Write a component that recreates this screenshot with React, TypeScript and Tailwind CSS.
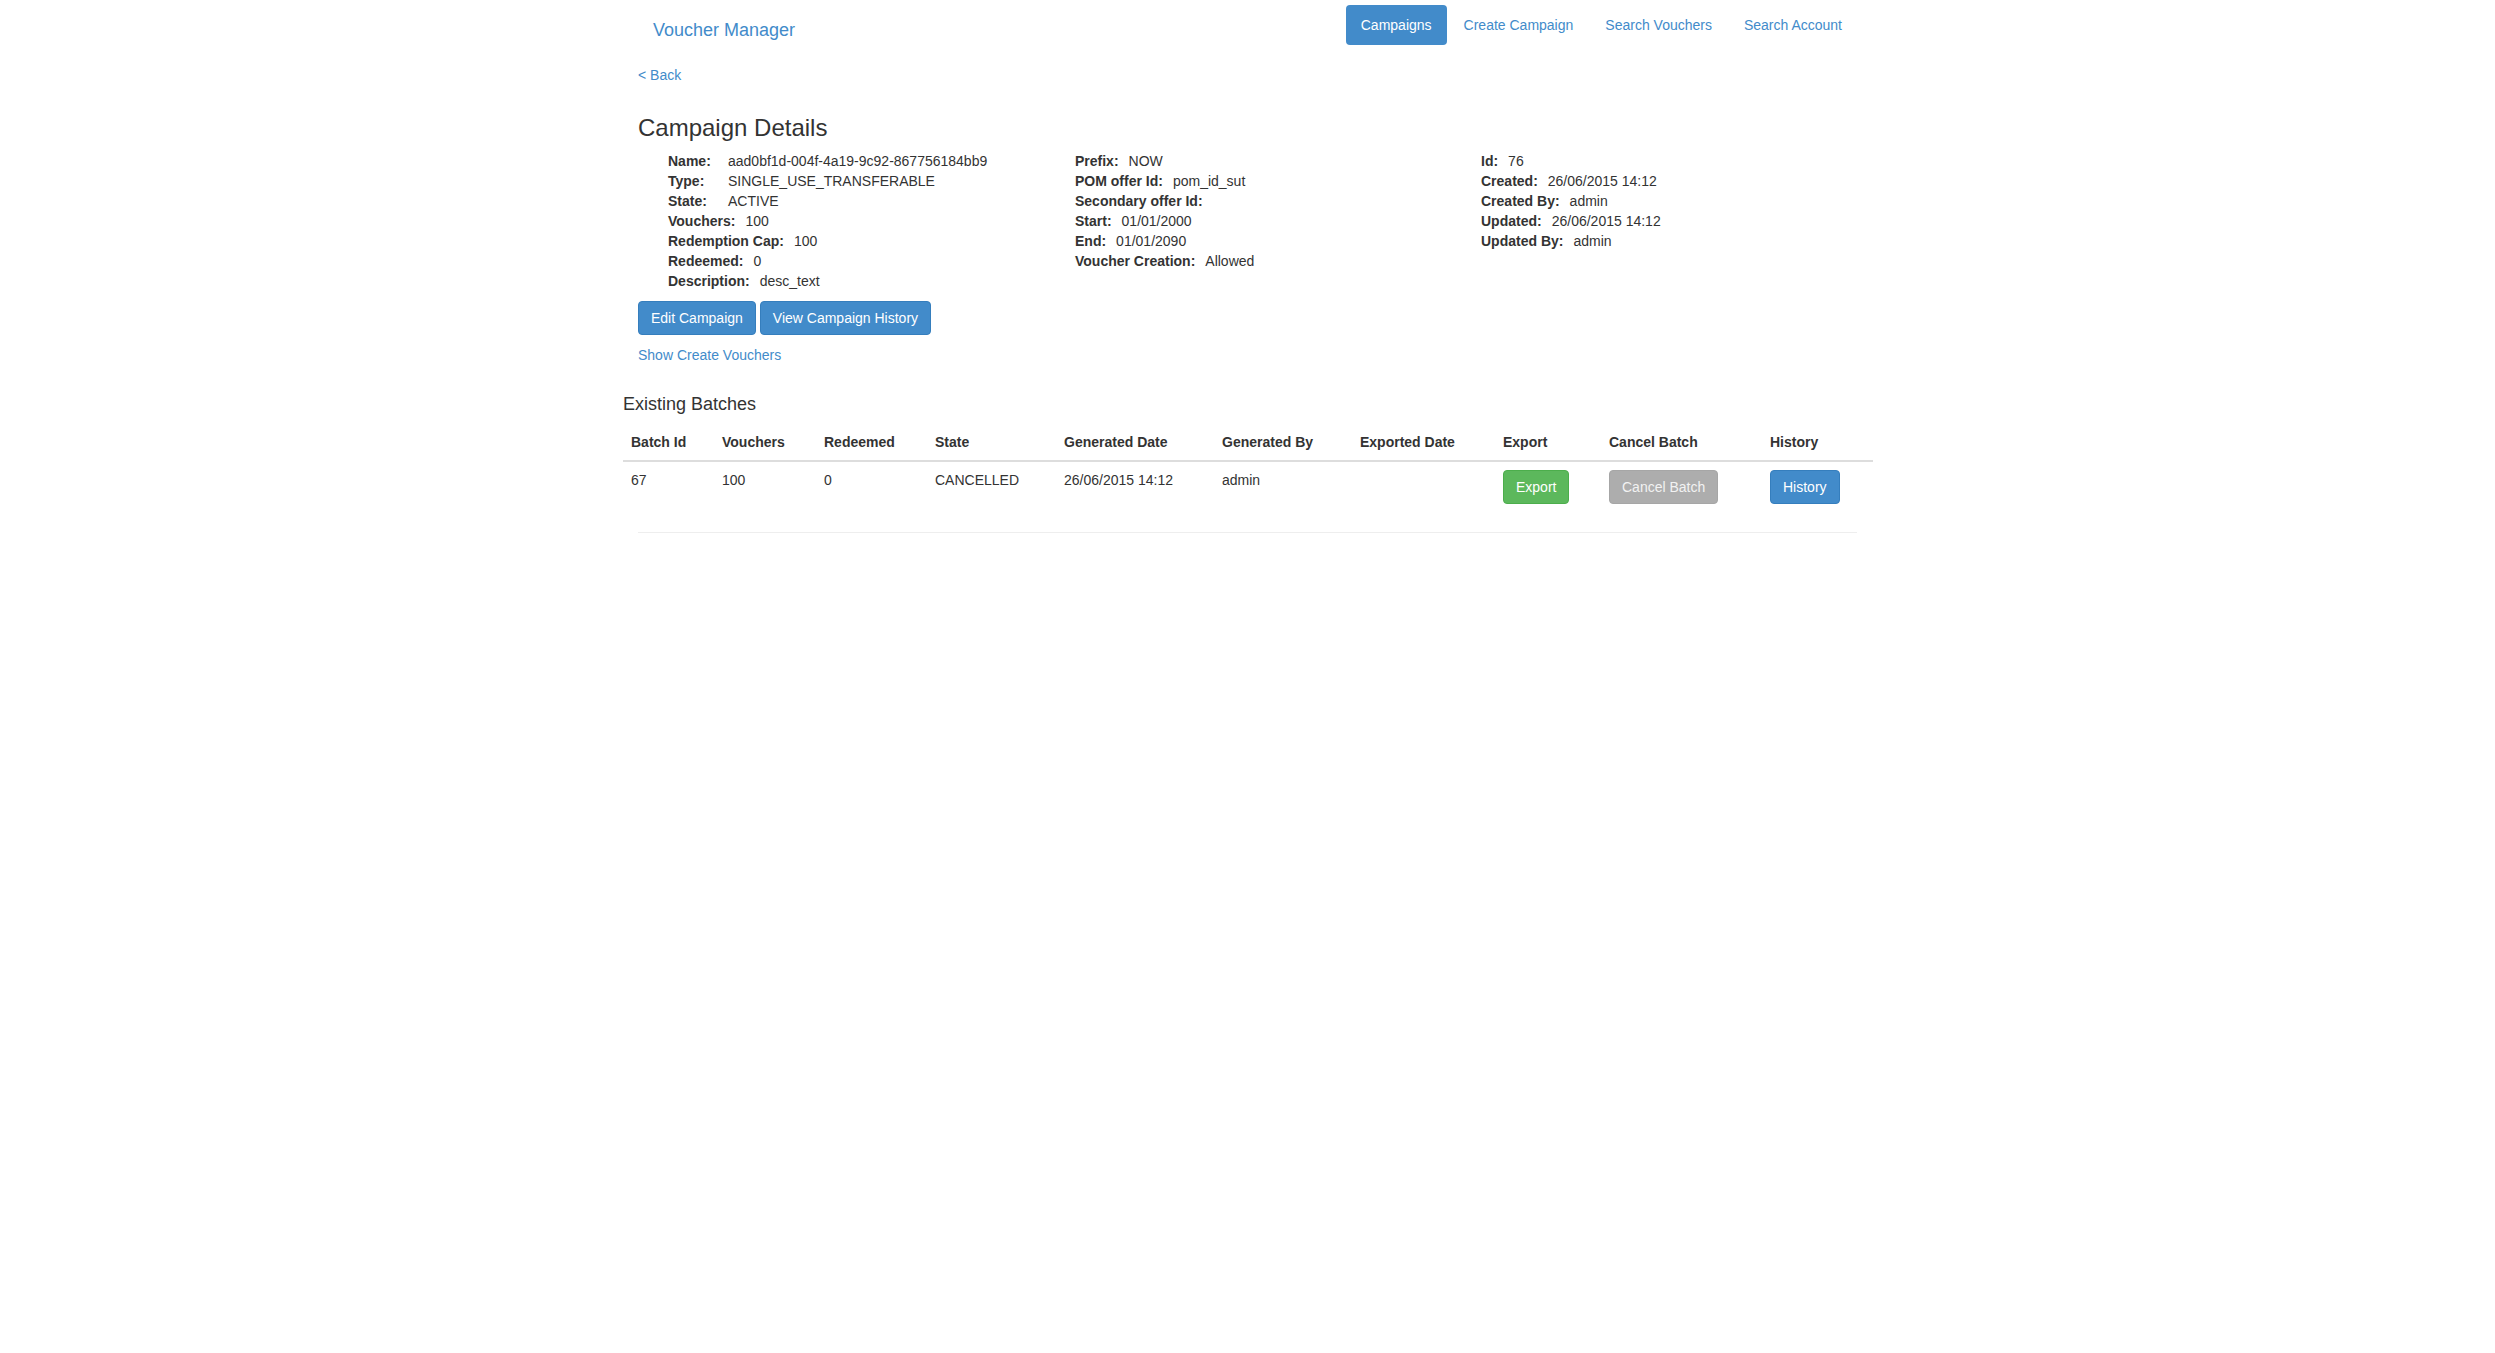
import React from 'react';

type Detail = { label: string; value: string; wide?: boolean };

const col1: Detail[] = [
  { label: 'Name:', value: 'aad0bf1d-004f-4a19-9c92-867756184bb9', wide: true },
  { label: 'Type:', value: 'SINGLE_USE_TRANSFERABLE', wide: true },
  { label: 'State:', value: 'ACTIVE', wide: true },
  { label: 'Vouchers:', value: '100' },
  { label: 'Redemption Cap:', value: '100' },
  { label: 'Redeemed:', value: '0' },
  { label: 'Description:', value: 'desc_text' },
];

const col2: Detail[] = [
  { label: 'Prefix:', value: 'NOW' },
  { label: 'POM offer Id:', value: 'pom_id_sut' },
  { label: 'Secondary offer Id:', value: '' },
  { label: 'Start:', value: '01/01/2000' },
  { label: 'End:', value: '01/01/2090' },
  { label: 'Voucher Creation:', value: 'Allowed' },
];

const col3: Detail[] = [
  { label: 'Id:', value: '76' },
  { label: 'Created:', value: '26/06/2015 14:12' },
  { label: 'Created By:', value: 'admin' },
  { label: 'Updated:', value: '26/06/2015 14:12' },
  { label: 'Updated By:', value: 'admin' },
];

function DetailList({ items }: { items: Detail[] }) {
  return (
    <ul>
      {items.map((d) => (
        <li key={d.label} className="flex whitespace-nowrap">
          <b className={d.wide ? 'min-w-[50px] font-bold' : 'font-bold'}>{d.label}</b>
          <span className="ml-[10px]">{d.value}</span>
        </li>
      ))}
    </ul>
  );
}

const columns = [
  { title: 'Batch Id', w: 'w-[91px]' },
  { title: 'Vouchers', w: 'w-[102px]' },
  { title: 'Redeemed', w: 'w-[111px]' },
  { title: 'State', w: 'w-[129px]' },
  { title: 'Generated Date', w: 'w-[158px]' },
  { title: 'Generated By', w: 'w-[138px]' },
  { title: 'Exported Date', w: 'w-[143px]' },
  { title: 'Export', w: 'w-[106px]' },
  { title: 'Cancel Batch', w: 'w-[161px]' },
  { title: 'History', w: 'w-[111px]' },
];

export default function App() {
  return (
    <div className="min-h-screen bg-white font-['Liberation_Sans',Arial,sans-serif] text-[14px] leading-[20px] text-[#333]">
      <div className="mx-auto w-[1251px]">
        {/* navbar */}
        <header className="flex h-[50px] justify-between">
          <a href="#" className="pl-[31px] pt-[20px] text-[18px] leading-[20px] text-[#428bca]">
            Voucher Manager
          </a>
          <ul className="mt-[5px] flex h-[40px] pr-[16px]">
            <li>
              <a href="#" className="block rounded-[4px] bg-[#428bca] px-[15px] py-[10px] text-white">
                Campaigns
              </a>
            </li>
            <li className="ml-[2px]">
              <a href="#" className="block px-[15px] py-[10px] text-[#428bca]">Create Campaign</a>
            </li>
            <li className="ml-[2px]">
              <a href="#" className="block px-[15px] py-[10px] text-[#428bca]">Search Vouchers</a>
            </li>
            <li className="ml-[2px]">
              <a href="#" className="block px-[15px] py-[10px] text-[#428bca]">Search Account</a>
            </li>
          </ul>
        </header>

        <div className="pl-[16px]">
          <a href="#" className="mt-[15px] block w-fit text-[#428bca]">&lt; Back</a>

          <h3 className="mt-[30px] text-[24px] leading-[26px] font-normal">Campaign Details</h3>

          <div className="mt-[10px] grid grid-cols-[407px_406px_1fr] pl-[30px]">
            <DetailList items={col1} />
            <DetailList items={col2} />
            <DetailList items={col3} />
          </div>

          <div className="mt-[10px] flex gap-[4px]">
            <button className="rounded-[4px] border border-[#357ebd] bg-[#428bca] px-[12px] py-[6px] text-white">
              Edit Campaign
            </button>
            <button className="rounded-[4px] border border-[#357ebd] bg-[#428bca] px-[12px] py-[6px] text-white">
              View Campaign History
            </button>
          </div>

          <a href="#" className="mt-[10px] block w-fit text-[#428bca]">Show Create Vouchers</a>
        </div>

        <h4 className="mt-[29px] pl-[1px] text-[18px] leading-[20px] font-normal">Existing Batches</h4>

        <table className="mt-[10px] ml-[1px] w-[1250px] table-fixed border-separate border-spacing-0 text-left">
          <thead>
            <tr>
              {columns.map((c) => (
                <th key={c.title} className={`${c.w} border-b-2 border-[#ddd] p-[8px] align-bottom font-bold`}>
                  {c.title}
                </th>
              ))}
            </tr>
          </thead>
          <tbody>
            <tr className="align-top">
              <td className="p-[8px]">67</td>
              <td className="p-[8px]">100</td>
              <td className="p-[8px]">0</td>
              <td className="p-[8px]">CANCELLED</td>
              <td className="p-[8px]">26/06/2015 14:12</td>
              <td className="p-[8px]">admin</td>
              <td className="p-[8px]"></td>
              <td className="p-[8px]">
                <button className="rounded-[4px] border border-[#4cae4c] bg-[#5cb85c] px-[12px] py-[6px] text-white">
                  Export
                </button>
              </td>
              <td className="p-[8px]">
                <button className="rounded-[4px] border border-[#a6a6a6] bg-[#adadad] px-[12px] py-[6px] text-[#f2f2f2]">
                  Cancel Batch
                </button>
              </td>
              <td className="p-[8px]">
                <button className="rounded-[4px] border border-[#357ebd] bg-[#428bca] px-[12px] py-[6px] text-white">
                  History
                </button>
              </td>
            </tr>
          </tbody>
        </table>

        <hr className="mx-[16px] mt-[20px] border-t border-[#eee]" />
      </div>
    </div>
  );
}
